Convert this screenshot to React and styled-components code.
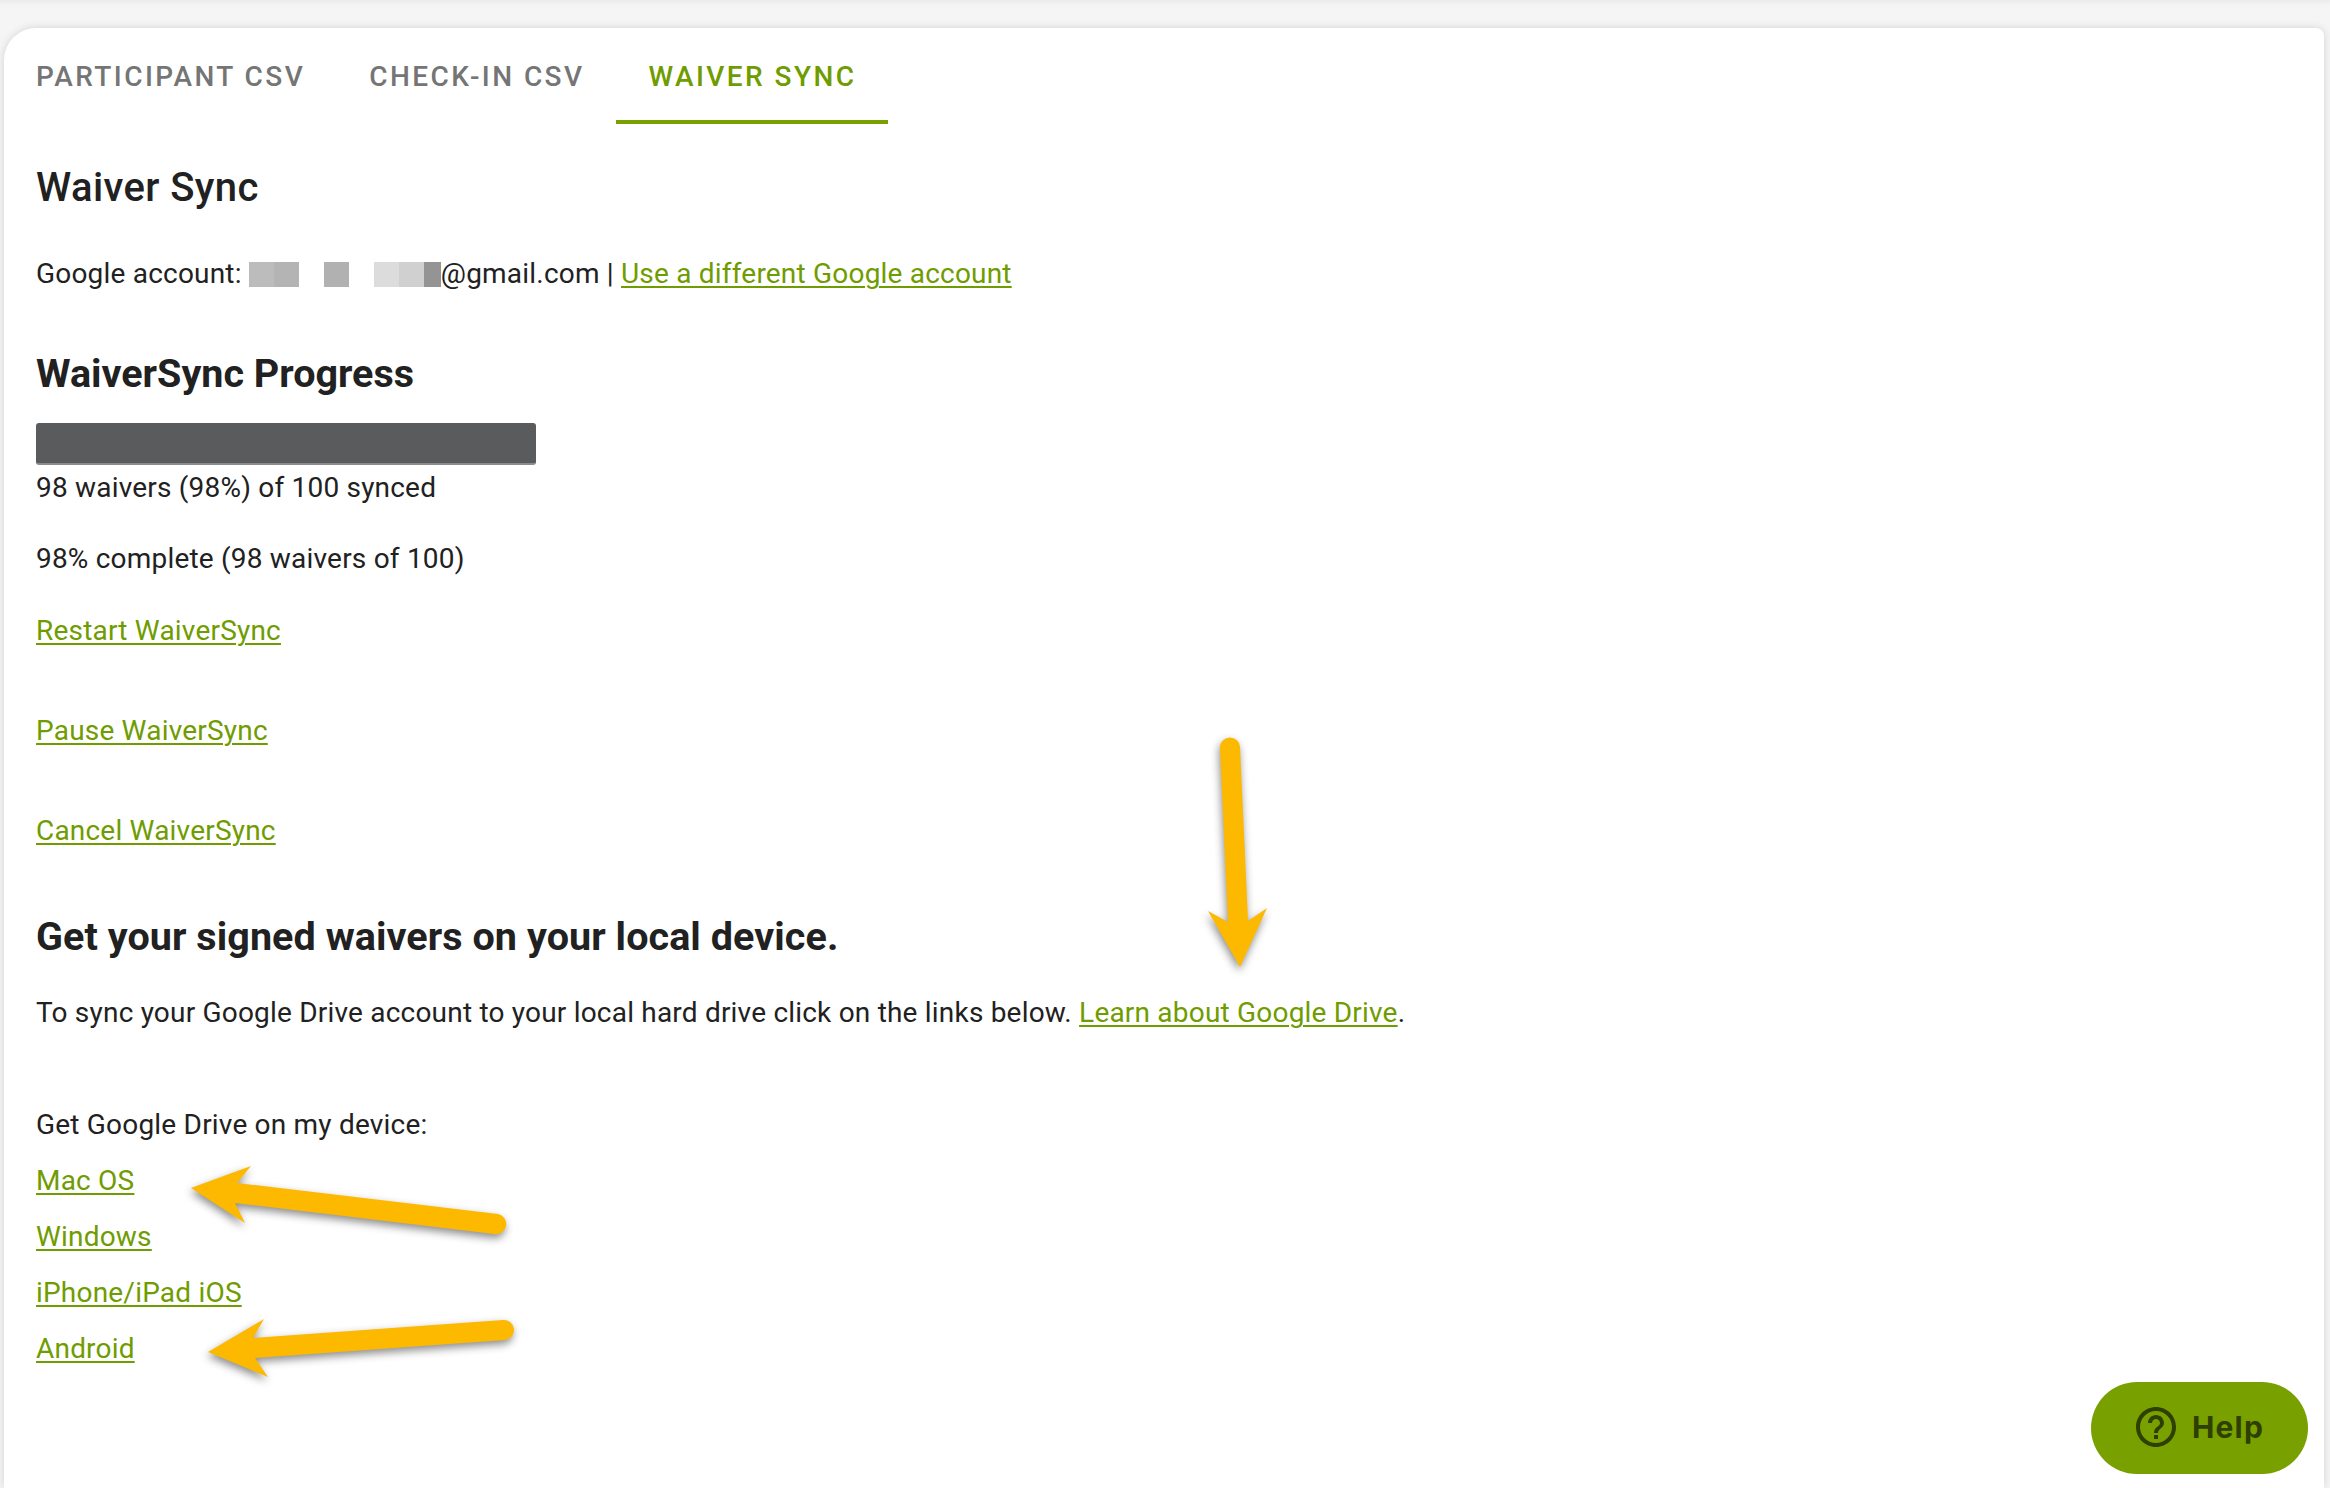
import React from "react";
import styled, { createGlobalStyle } from "styled-components";
import { MdHelpOutline } from "react-icons/md";

const Global = createGlobalStyle`
  html, body { margin: 0; padding: 0; height: 1488px; overflow: hidden; background: #f5f5f5; }
  body { font-family: Roboto, "Liberation Sans", sans-serif; color: #212121; }
`;

const Page = styled.div`
  position: relative;
  width: 2330px;
  height: 1488px;
  padding: 28px 6px 0 4px;
  box-sizing: border-box;
  overflow: hidden;
  background: linear-gradient(#ececec 0, #f5f5f5 6px);
`;

const Card = styled.main`
  height: 100%;
  background: #fff;
  border-radius: 32px 8px 0 0;
  box-shadow: 0 0 8px rgba(0, 0, 0, 0.14);
`;

const Tabs = styled.nav`
  display: flex;
  height: 96px;
`;

const Tab = styled.div`
  box-sizing: border-box;
  padding: 0 32px;
  height: 96px;
  line-height: 98px;
  font-size: 28px;
  font-weight: 500;
  letter-spacing: 2.43px;
  white-space: nowrap;
  color: ${(p) => (p.$active ? "#6f9c00" : "#757575")};
  border-bottom: 4px solid ${(p) => (p.$active ? "#78a100" : "transparent")};
`;

const Body = styled.section`
  padding-left: 32px;
`;

const Title = styled.h1`
  margin: ${(p) => p.$top}px 0 0;
  line-height: 56px;
  font-size: ${(p) => p.$size}px;
  font-weight: ${(p) => p.$weight};
  letter-spacing: ${(p) => p.$spacing || 0}px;
  color: #212121;
`;

const Line = styled.div`
  margin-top: ${(p) => p.$top || 0}px;
  line-height: 44px;
  font-size: 28px;
  letter-spacing: 0.2px;
  white-space: nowrap;
  display: flex;
  align-items: center;
`;

const Pre = styled.span`
  white-space: pre;
`;

const Link = styled.a`
  color: #6f9c00;
  text-decoration: underline;
  text-underline-offset: 3px;
  text-decoration-thickness: 2px;
  white-space: pre;
`;

const Pixel = styled.span`
  display: block;
  width: ${(p) => p.$w || 25}px;
  height: 25px;
  background: ${(p) => p.$c};
`;

const Bar = styled.div`
  margin-top: 21px;
  width: 500px;
  height: 42px;
  box-sizing: border-box;
  background: #5a5b5d;
  border-bottom: 2px solid #8a8b8c;
  border-radius: 3px;
`;

const Arrows = styled.svg`
  position: absolute;
  inset: 0;
  pointer-events: none;
  filter: drop-shadow(-1px 4px 4px rgba(0, 0, 0, 0.45));
`;

const HelpButton = styled.button`
  position: absolute;
  left: 2091px;
  top: 1382px;
  width: 217px;
  height: 92px;
  border: 0;
  border-radius: 46px;
  background: #78a100;
  color: #2f3f00;
  display: flex;
  align-items: center;
  justify-content: center;
  gap: 12px;
  padding: 0 3px 2px 0;
  font-family: Inter, "Liberation Sans", sans-serif;
  font-size: 30px;
  font-weight: 700;
  letter-spacing: 1.2px;
`;

export default function App() {
  return (
    <>
      <Global />
      <Page>
        <Card>
          <Tabs>
            <Tab>PARTICIPANT CSV</Tab>
            <Tab>CHECK-IN CSV</Tab>
            <Tab $active>WAIVER SYNC</Tab>
          </Tabs>
          <Body>
            <Title $top={36} $size={40} $weight={500} $spacing={0.4}>Waiver Sync</Title>
            <Line $top={36}>
              <Pre>Google account: </Pre>
              <Pixel $c="#bcbcbc" />
              <Pixel $c="#b4b4b4" />
              <Pixel $c="transparent" />
              <Pixel $c="#b1b1b1" />
              <Pixel $c="transparent" />
              <Pixel $c="#dcdcdc" />
              <Pixel $c="#d0d0d0" />
              <Pixel $c="#949494" $w={17} />
              <Pre>@gmail.com | </Pre>
              <Link href="#">Use a different Google account</Link>
            </Line>
            <Title $top={50} $size={39.5} $weight={700}>WaiverSync Progress</Title>
            <Bar />
            <Line $top={1}>98 waivers (98%) of 100 synced</Line>
            <Line $top={27}>98% complete (98 waivers of 100)</Line>
            <Line $top={28}><Link href="#">Restart WaiverSync</Link></Line>
            <Line $top={56}><Link href="#">Pause WaiverSync</Link></Line>
            <Line $top={56}><Link href="#">Cancel WaiverSync</Link></Line>
            <Title $top={56} $size={39.5} $weight={700} $spacing={0.07}>Get your signed waivers on your local device.</Title>
            <Line $top={26}>
              <Pre>To sync your Google Drive account to your local hard drive click on the links below. </Pre>
              <Link href="#">Learn about Google Drive</Link>
              <Pre>.</Pre>
            </Line>
            <Line $top={68}>Get Google Drive on my device:</Line>
            <Line $top={12}><Link href="#">Mac OS</Link></Line>
            <Line $top={12}><Link href="#">Windows</Link></Line>
            <Line $top={12}><Link href="#">iPhone/iPad iOS</Link></Line>
            <Line $top={12}><Link href="#">Android</Link></Line>
          </Body>
        </Card>
        <Arrows width="2330" height="1488" viewBox="0 0 2330 1488">
          <g fill="#fdb900">
            <path d="M1220 748 A10 10 0 0 1 1240 747 L1248 921 L1267 908 L1240 967 L1208 911 L1228 922 Z" />
            <path d="M191 1188 L251 1166 L237 1183 L498 1214 A10 10 0 0 1 494 1234 L235 1203 L245 1223 Z" />
            <path d="M208 1352 L264 1319 L253 1338 L503 1320 A10 10 0 0 1 505 1340 L255 1358 L268 1377 Z" />
          </g>
        </Arrows>
        <HelpButton>
          <MdHelpOutline size={48} />
          Help
        </HelpButton>
      </Page>
    </>
  );
}
